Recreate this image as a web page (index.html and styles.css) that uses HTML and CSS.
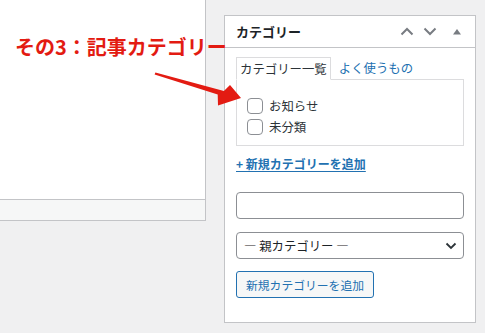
FILE: index.html
```html
<!DOCTYPE html>
<html lang="ja">
<head>
  <meta charset="UTF-8">
  <title>カテゴリー</title>
  <link rel="stylesheet" href="styles.css">
</head>
<body>
  <div class="screen">
    <div class="editor">
      <div class="editor-body"></div>
      <div class="editor-status"></div>
    </div>

    <div class="postbox">
      <div class="postbox-header">
        <h2 class="hndle">カテゴリー</h2>
        <div class="handle-actions">
          <span class="handle-btn">
            <svg width="14" height="9" viewBox="0 0 14 9"><path d="M1.5 7.5 L7 2 L12.5 7.5" fill="none" stroke="#787c82" stroke-width="2"/></svg>
          </span>
          <span class="handle-btn">
            <svg width="14" height="9" viewBox="0 0 14 9"><path d="M1.5 1.5 L7 7 L12.5 1.5" fill="none" stroke="#787c82" stroke-width="2"/></svg>
          </span>
          <span class="handle-btn toggle">
            <svg width="10" height="7" viewBox="0 0 10 7"><path d="M1 6.5 L5 1 L9 6.5 Z" fill="#787c82"/></svg>
          </span>
        </div>
      </div>

      <div class="inside">
        <ul class="category-tabs">
          <li class="tab active">カテゴリー一覧</li>
          <li class="tab"><a href="#">よく使うもの</a></li>
        </ul>
        <div class="tabs-panel">
          <label class="cat-item"><input type="checkbox"> お知らせ</label>
          <label class="cat-item"><input type="checkbox"> 未分類</label>
        </div>

        <a href="#" class="add-toggle">+&nbsp;新規カテゴリーを追加</a>

        <input type="text" class="new-cat">
        <div class="select-wrap">
          <select class="parent-cat">
            <option>— 親カテゴリー —</option>
          </select>
          <svg class="select-arrow" width="12" height="8" viewBox="0 0 12 8"><path d="M1.5 1.5 L6 6 L10.5 1.5" fill="none" stroke="#2c3338" stroke-width="1.8"/></svg>
        </div>
        <button class="add-btn">新規カテゴリーを追加</button>
      </div>
    </div>

    <!-- annotation -->
    <div class="note">その3：記事カテゴリー</div>
    <svg class="note-arrow" width="485" height="333" viewBox="0 0 485 333">
      <polygon points="155.4,72.6 223.9,90.9 230,85 241,98 218,105.5 217.7,94.4 154.6,74.4" fill="#e31b12"/>
    </svg>
  </div>
</body>
</html>
```

FILE: styles.css
```css
body {
  margin: 0;
  background-color: #f0f0f1;
  font-family: "Noto Sans CJK JP", "Noto Sans", sans-serif;
  color: #1d2327;
}

.screen {
  position: relative;
  display: flex;
  align-items: flex-start;
  width: 485px;
  height: 333px;
  overflow: hidden;
}

.editor {
  width: 206px;
  border-right: 1px solid #c3c4c7;
  border-bottom: 1px solid #c3c4c7;
  box-sizing: border-box;
  flex-shrink: 0;
}

.editor-body {
  height: 199px;
  background-color: #fff;
}

.editor-status {
  height: 20px;
  background-color: #f6f7f7;
  border-top: 1px solid #c3c4c7;
}

.postbox {
  width: 252px;
  height: 308px;
  margin: 15px 0 0 18px;
  box-sizing: border-box;
  background-color: #fff;
  border: 1px solid #c3c4c7;
  flex-shrink: 0;
}

.postbox-header {
  display: flex;
  align-items: center;
  justify-content: space-between;
  height: 32px;
  box-sizing: border-box;
  border-bottom: 1px solid #c3c4c7;
  padding-left: 11px;
}

.hndle {
  margin: 0;
  font-size: 13px;
  font-weight: 700;
  color: #1d2327;
  line-height: 20px;
}

.handle-actions {
  display: flex;
  align-items: center;
  height: 100%;
}

.handle-btn {
  display: flex;
  align-items: center;
  justify-content: center;
  width: 23px;
  height: 100%;
}

.handle-btn.toggle {
  width: 34px;
  padding-right: 2px;
  box-sizing: border-box;
}

.inside {
  padding: 9px 11px 0 11px;
  font-size: 12px;
}

.category-tabs {
  display: flex;
  margin: 0;
  padding: 0;
  list-style: none;
  position: relative;
  z-index: 1;
}

.tab {
  height: 23px;
  box-sizing: border-box;
  padding: 0 3px;
  line-height: 22px;
  font-size: 12.4px;
  color: #2c3338;
}

.tab.active {
  border: 1px solid #dcdcde;
  border-bottom-color: #fff;
  background-color: #fff;
}

.tab a {
  display: block;
  margin-left: 5px;
  color: #2271b1;
  text-decoration: none;
}

.tabs-panel {
  margin-top: -1px;
  height: 67px;
  box-sizing: border-box;
  border: 1px solid #dcdcde;
  padding: 15px 10px 0 10px;
}

.cat-item {
  display: flex;
  align-items: center;
  height: 21px;
  font-size: 12.4px;
  color: #2c3338;
}

.cat-item input {
  appearance: none;
  width: 16px;
  height: 16px;
  margin: 0 6px 0 0;
  border: 1px solid #8c8f94;
  border-radius: 4px;
  background-color: #fff;
}

.add-toggle {
  display: inline-block;
  margin-top: 10px;
  line-height: 16px;
  font-size: 12px;
  font-weight: 700;
  color: #2271b1;
  text-decoration: underline;
  text-underline-offset: 2px;
}

.new-cat {
  display: block;
  width: 228px;
  height: 27px;
  box-sizing: border-box;
  margin: 20px 0 0 0;
  border: 1px solid #8c8f94;
  border-radius: 4px;
  background-color: #fff;
}

.select-wrap {
  position: relative;
  margin-top: 13px;
}

.parent-cat {
  display: block;
  appearance: none;
  width: 228px;
  height: 27px;
  box-sizing: border-box;
  margin: 0;
  padding: 0 24px 0 7px;
  border: 1px solid #8c8f94;
  border-radius: 4px;
  background-color: #fff;
  font-family: inherit;
  font-size: 12.4px;
  color: #1d2327;
}

.select-arrow {
  position: absolute;
  right: 7px;
  top: 10px;
}

.add-btn {
  display: block;
  margin-top: 12px;
  height: 27px;
  padding: 0 9px;
  box-sizing: border-box;
  border: 1px solid #2271b1;
  border-radius: 3px;
  background-color: #f6f7f7;
  font-family: inherit;
  font-size: 11.8px;
  color: #2271b1;
}

.note {
  position: absolute;
  left: 15px;
  top: 37px;
  font-size: 20px;
  font-weight: 700;
  line-height: 20px;
  color: #e31b12;
  white-space: nowrap;
}

.note-arrow {
  position: absolute;
  left: 0;
  top: 0;
  pointer-events: none;
}
```
